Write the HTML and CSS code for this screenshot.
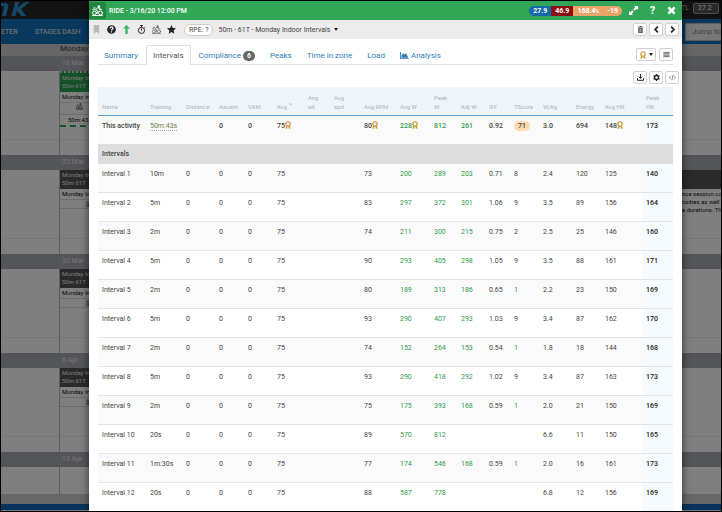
FILE: index.html
```html
<!DOCTYPE html>
<html lang="en">

<head>
	<meta charset="utf-8">
	<title>Ride intervals</title>
	<link rel="stylesheet" href="styles.css">
</head>

<body>
	<svg class="sprite" aria-hidden="true">
		<symbol id="cyclist" viewBox="0 0 20 20">
			<g fill="none" stroke="currentColor" stroke-width="1.7" stroke-linecap="round" stroke-linejoin="round">
				<circle cx="4.5" cy="14.5" r="3.5" />
				<circle cx="15.5" cy="14.5" r="3.5" />
				<path d="M15 6l-4-1.500-4.500 4 4.500 2.500-2 5M12 5l2 3.500h3.500M1 19.200h18M3 5.500h3M1.500 8.500h3" />
			</g>
			<circle cx="12.500" cy="2.500" r="2.200" fill="currentColor" />
		</symbol>
		<symbol id="medal" viewBox="0 0 12 16">
			<g fill="none" stroke="currentColor" stroke-width="2.4">
				<circle cx="6" cy="6" r="4.500" />
				<path d="M3.500 9.500v4.500H.5M8.500 9.500v4.500h3" />
			</g>
		</symbol>
	</svg>

	<div class="calendar">
		<header class="topbar">
			<svg class="logo" viewBox="0 0 30 16"><path d="M0 2h3c4 0 5 2 4 5L5 15H1l2-8c0-2 0-2-3-2zM14 1h4l-1.500 5.500L24 1h5l-9 7 5 7h-5l-4-5.500L14.500 15h-4z" fill="currentColor" /></svg>
			<label class="tl">TL <input type="text" value="27.2"></label>
		</header>
		<nav class="mainnav">
			<a href="#">ETER</a>
			<a href="#">STAGES DASH</a>
			<input class="jump" type="text" placeholder="Jump to" aria-label="Jump to">
		</nav>
		<div class="days"><span>Monday</span></div>

		<section class="week">
			<h2>16 Mar</h2>
			<div class="cells">
				<div class="cell"></div>
				<div class="cell">
					<div class="event done">
						<div class="event-head">Monday Indoor<br>50m 61T</div>
						<div class="event-name">Monday Indoor</div>
						<div class="event-icon"><svg><use href="#cyclist" /></svg></div>
						<div class="event-time">50m:43s</div>
					</div>
				</div>
				<div class="cell"></div>
			</div>
		</section>
		<section class="week">
			<h2>23 Mar</h2>
			<div class="cells">
				<div class="cell"></div>
				<div class="cell">
					<div class="event">
						<div class="event-head">Monday Indoor<br>50m 61T</div>
						<div class="event-name">Monday Indoor</div>
						<div class="event-icon"><svg><use href="#cyclist" /></svg></div>
					</div>
				</div>
				<div class="cell">
					<div class="event">
						<div class="event-head"></div>
						<p class="event-note">nce session co<br>nsities as well<br>e durations. Th</p>
					</div>
				</div>
			</div>
		</section>
		<section class="week">
			<h2>30 Mar</h2>
			<div class="cells">
				<div class="cell"></div>
				<div class="cell">
					<div class="event">
						<div class="event-head">Monday Indoor<br>50m 61T</div>
						<div class="event-name">Monday Indoor</div>
						<div class="event-icon"><svg><use href="#cyclist" /></svg></div>
					</div>
				</div>
				<div class="cell"></div>
			</div>
		</section>
		<section class="week">
			<h2>6 Apr</h2>
			<div class="cells">
				<div class="cell"></div>
				<div class="cell">
					<div class="event">
						<div class="event-head">Monday Indoor<br>50m 61T</div>
						<div class="event-name">Monday Indoor</div>
						<div class="event-icon"><svg><use href="#cyclist" /></svg></div>
					</div>
				</div>
				<div class="cell"></div>
			</div>
		</section>
		<section class="week last">
			<h2>13 Apr</h2>
			<div class="cells">
				<div class="cell"></div>
				<div class="cell"></div>
				<div class="cell"></div>
			</div>
		</section>
		<footer class="bottombar"></footer>
	</div>

	<div class="backdrop"></div>

	<main class="modal">
		<header class="modal-head">
			<span class="sport"><svg><use href="#cyclist" /></svg></span>
			<h1>RIDE - 3/16/20 12:00 PM</h1>
			<div class="scores">
				<span class="fitness">27.9</span>
				<span class="fatigue">46.9</span>
				<span class="form">168.4<small>%</small></span>
				<span class="form">-19</span>
			</div>
			<button class="head-btn" aria-label="Expand"><svg viewBox="0 0 10 10"><path d="M5.500 0H10v4.500L8.500 3 6.300 5.200 4.800 3.700 7 1.500zM4.500 10H0V5.500L1.500 7l2.200-2.200 1.500 1.500L3 8.500z" fill="currentColor" /></svg></button>
			<button class="head-btn help" aria-label="Help">?</button>
			<button class="head-btn" aria-label="Close"><svg viewBox="0 0 10 10"><path d="M1.500 1.500l7 7M8.500 1.500l-7 7" stroke="currentColor" stroke-width="2.800" /></svg></button>
		</header>

		<div class="toolbar">
			<button class="icon-btn light" aria-label="Bookmark"><svg viewBox="0 0 10 10"><path d="M2 0h6v10L5 7.500 2 10z" fill="currentColor" /></svg></button>
			<button class="icon-btn" aria-label="Info"><svg viewBox="0 0 10 10"><circle cx="5" cy="5" r="4.800" fill="currentColor" /><path d="M3.400 3.800C3.400 1.600 6.700 1.700 6.600 3.700 6.500 4.900 5 4.700 5 6.200M5 7v1.200" fill="none" stroke="#fff" stroke-width="1.300" /></svg></button>
			<button class="icon-btn green" aria-label="Upload"><svg viewBox="0 0 10 10"><path d="M5 0l3.800 4H6.300v6H3.700V4H1.200z" fill="currentColor" /></svg></button>
			<button class="icon-btn" aria-label="Timer"><svg viewBox="0 0 10 10"><g fill="none" stroke="currentColor" stroke-width="1.100"><circle cx="5" cy="6" r="3.400" /><path d="M3.500.6h3M5 .6v2M5 4v2.200M8 2.200l.8.8" /></g></svg></button>
			<button class="icon-btn gray" aria-label="Cycling"><svg><use href="#cyclist" /></svg></button>
			<button class="icon-btn" aria-label="Favourite"><svg viewBox="0 0 10 10"><path d="M5 0l1.500 3.300 3.500.4-2.600 2.400.7 3.600L5 7.900 1.900 9.700l.7-3.600L0 3.700l3.500-.4z" fill="currentColor" /></svg></button>
			<button class="rpe">RPE: ?</button>
			<button class="workout">50m - 61T - Monday Indoor Intervals <i class="caret"></i></button>
			<div class="group tight">
				<button class="box" aria-label="Delete"><svg viewBox="0 0 10 10"><path d="M1 1h2.500V0h3v1H9v1.300H1zM1.800 3h6.400v7H1.800z" fill="#555" /><path d="M3.500 4.500h3M3.500 6.200h3M3.500 8h3" stroke="#fff" stroke-width=".7" /></svg></button>
				<button class="box" aria-label="Previous"><svg viewBox="0 0 10 10"><path d="M7 1L3 5l4 4" fill="none" stroke="currentColor" stroke-width="2.400" /></svg></button>
				<button class="box" aria-label="Next"><svg viewBox="0 0 10 10"><path d="M3 1l4 4-4 4" fill="none" stroke="currentColor" stroke-width="2.400" /></svg></button>
			</div>
		</div>

		<nav class="tabs">
			<a href="#">Summary</a>
			<a href="#" class="active">Intervals</a>
			<a href="#">Compliance <span class="count">6</span></a>
			<a href="#">Peaks</a>
			<a href="#">Time in zone</a>
			<a href="#">Load</a>
			<a href="#"><svg class="chart" viewBox="0 0 10 8"><path d="M0 0h1v7h9v1H0zM1.500 6.500V4l2-3 1.800 2L7 1.500l2.300 5z" fill="currentColor" /></svg> Analysis</a>
			<div class="group">
				<button class="box wide" aria-label="Medals"><svg class="medal"><use href="#medal" /></svg><i class="caret"></i></button>
				<button class="box" aria-label="List"><svg viewBox="0 0 10 10"><path d="M.5 2h9M.5 4h9M.5 6h9M.5 8h9" stroke="#555" stroke-width="1.200" /></svg></button>
			</div>
		</nav>

		<div class="actions">
			<button class="box" aria-label="Download"><svg viewBox="0 0 10 10"><path d="M5 0v6M2.500 3.800L5 6.300l2.500-2.500M.7 6v3h8.600V6" fill="none" stroke="currentColor" stroke-width="1.400" /></svg></button>
			<button class="box" aria-label="Settings"><svg viewBox="0 0 10 10"><circle cx="5" cy="5" r="2.800" fill="none" stroke="currentColor" stroke-width="2" /><path d="M5 0v2M5 8v2M.7 2.500l1.700 1M7.600 6.500l1.700 1M.7 7.500l1.700-1M7.600 3.500l1.700-1" stroke="currentColor" stroke-width="1.800" /></svg></button>
			<button class="box" aria-label="Embed"><svg viewBox="0 0 10 10"><path d="M2.800 2.500L.5 5l2.300 2.500M7.200 2.500L9.500 5 7.200 7.500M5.800 1.500l-1.600 7" fill="none" stroke="#555" stroke-width="1" /></svg></button>
		</div>

		<table class="intervals">
			<colgroup>
				<col class="w48"><col class="w36"><col class="w33"><col class="w29"><col class="w29"><col class="w31">
				<col class="w26"><col class="w30"><col class="w36"><col class="w34"><col class="w27"><col class="w28">
				<col class="w25"><col class="w29"><col class="w33"><col class="w29"><col class="w41"><col class="w31">
			</colgroup>
			<thead>
				<tr>
					<th><span>Name</span></th>
					<th><span>Training</span></th>
					<th><span>Distance</span></th>
					<th><span>Ascent</span></th>
					<th><span>VAM</span></th>
					<th><span>Avg <sup>°F</sup></span></th>
					<th><span>Avg<br>alt</span></th>
					<th><span>Avg<br>spd</span></th>
					<th><span>Avg RPM</span></th>
					<th><span>Avg W</span></th>
					<th><span>Peak<br>W</span></th>
					<th><span>Adj W</span></th>
					<th><span>IFF</span></th>
					<th><span>TScore</span></th>
					<th><span>W/kg</span></th>
					<th><span>Energy</span></th>
					<th><span>Avg HR</span></th>
					<th><span>Peak<br>HR</span></th>
				</tr>
			</thead>
			<tbody id="rows">
				<tr class="total">
					<td>This activity</td>
					<td><span class="dotted">50m:43s</span></td>
					<td></td>
					<td>0</td>
					<td>0</td>
					<td>75<svg class="medal bronze"><use href="#medal" /></svg></td>
					<td></td>
					<td></td>
					<td>80<svg class="medal"><use href="#medal" /></svg></td>
					<td class="good">228<svg class="medal"><use href="#medal" /></svg></td>
					<td class="good">812</td>
					<td class="good">261</td>
					<td>0.92</td>
					<td><span class="score">71</span></td>
					<td>3.0</td>
					<td>694</td>
					<td>148<svg class="medal"><use href="#medal" /></svg></td>
					<td>173</td>
				</tr>
				<tr class="section">
					<th colspan="18">Intervals</th>
				</tr>
			</tbody>
		</table>
	</main>

	<script>
		// training, rpm, avg W, peak W, adj W, IFF, TScore, W/kg, energy, avg HR, peak HR
		const intervals = [
			["10m", 73, 200, 289, 203, "0.71", 8, "2.4", 120, 125, 140],
			["5m", 83, 297, 372, 301, "1.06", 9, "3.5", 89, 156, 164],
			["2m", 74, 211, 300, 215, "0.75", 2, "2.5", 25, 146, 160],
			["5m", 90, 293, 405, 298, "1.05", 9, "3.5", 88, 161, 171],
			["2m", 80, 189, 313, 186, "0.65", 1, "2.2", 23, 150, 169],
			["5m", 93, 290, 407, 293, "1.03", 9, "3.4", 87, 162, 170],
			["2m", 74, 152, 264, 153, "0.54", 1, "1.8", 18, 144, 168],
			["5m", 93, 290, 418, 292, "1.02", 9, "3.4", 87, 163, 173],
			["2m", 75, 175, 393, 168, "0.59", 1, "2.0", 21, 150, 169],
			["20s", 89, 570, 812, "", "", "", "6.6", 11, 150, 165],
			["1m:30s", 77, 174, 546, 168, "0.59", 1, "2.0", 16, 161, 173],
			["20s", 88, 587, 778, "", "", "", "6.8", 12, 156, 169]
		]
		const body = document.getElementById("rows")
		intervals.forEach((r, i) => {
			const cells = ["Interval " + (i + 1), r[0], 0, 0, 0, 75, "", "", ...r.slice(1)]
			const tr = body.insertRow()
			cells.forEach((value, col) => {
				const td = tr.insertCell()
				td.textContent = value
				if ((col >= 9 && col <= 11) || (col == 13 && value === 1)) td.className = "good"
			})
		})
	</script>
</body>

</html>
```
FILE: styles.css
```css
* {
	box-sizing: border-box;
}

body {
	position: relative;
	margin: 0;
	height: 100vh;
	overflow: hidden;
	border: 1px solid #000;
	background: #fff;
	color: #444;
	font-family: Roboto, "Liberation Sans", sans-serif;
	font-size: 7px;
	line-height: 10px;
}

button, input {
	font: inherit;
	color: inherit;
}

button {
	display: flex;
	align-items: center;
	justify-content: center;
	padding: 0;
	border: 0;
	background: none;
}

a {
	text-decoration: none;
}

.sprite {
	display: none;
}

/* calendar behind the dialog */
.calendar {
	height: 100%;
	overflow: hidden;
}

.topbar {
	display: flex;
	justify-content: space-between;
	height: 18px;
	padding-right: 2px;
	background: #262626;
}

.logo {
	width: 30px;
	height: 16px;
	color: #2f8fd0;
}

.tl {
	display: flex;
	align-items: center;
	gap: 4px;
	height: 14px;
	color: #ccc;
}

.tl input {
	width: 26px;
	height: 11px;
	padding: 0 4px;
	border: 1px solid #999;
	border-radius: 2px;
	background: #555;
	color: #fff;
}

.mainnav {
	display: flex;
	align-items: center;
	gap: 17px;
	height: 25px;
	background: #1070b8;
	font-weight: 500;
}

.mainnav a {
	color: #ddd;
}

.jump {
	width: 36px;
	height: 18px;
	margin-left: auto;
	padding: 0 0 0 6px;
	border: 1px solid #bbb;
	border-right: 0;
	background: #eee;
	font-size: 8px;
	font-weight: 400;
}

.jump::placeholder {
	color: #888;
}

.days {
	height: 12px;
	padding-left: 59px;
	background: #ccc;
	font-size: 8px;
}

.week h2 {
	margin: 0;
	height: 15px;
	padding-left: 61px;
	background: #a8abb0;
	color: #e8e8e8;
	font-size: 7px;
	font-weight: 400;
	line-height: 15px;
}

.cells {
	display: grid;
	grid-template-columns: 59px 1fr 39px;
	height: 84px;
	background: linear-gradient(#eee, #eee) 0 68px / 100% 1px no-repeat;
}

.last .cells {
	height: 27px;
	background: none;
}

.cell:first-child {
	border-right: 1px solid #bbb;
}

.cell {
	overflow: hidden;
}

.event {
	font-size: 6px;
	line-height: 8px;
	color: #111;
}

.event-head {
	height: 19px;
	padding: 1px 2px;
	background: #555;
	color: #eee;
}

.event-name {
	padding: 1px 2px;
	border-bottom: 1px solid #ddd;
}

.event-icon {
	height: 9px;
	padding-left: 26px;
	border-bottom: 1px solid #ddd;
	color: #555;
}

.event-icon svg {
	width: 7px;
	height: 7px;
}

.done {
	border-bottom: 2px dashed #2aa552;
}

.done .event-head {
	height: 21px;
	border-top: 2px dotted #ddd;
	background: #2aa552;
}

.done .event-icon {
	padding-left: 16px;
	height: 12px;
}

.event-time {
	padding: 1px 8px;
}

.event-note {
	margin: 0;
	padding-top: 1px;
	white-space: nowrap;
}

.bottombar {
	height: 16px;
	border-bottom: 6px solid #0d69b4;
	background: #d0d0d0;
}

.backdrop {
	position: absolute;
	inset: 0;
	background: rgba(0, 0, 0, .5);
}

/* dialog */
.modal {
	position: absolute;
	inset: 0 39px 0 88px;
	overflow: hidden;
	background: #fff;
	box-shadow: 0 0 8px rgba(0, 0, 0, .6);
}

.modal-head {
	display: flex;
	align-items: center;
	height: 19px;
	padding-right: 1px;
	background: #30a656;
	color: #fff;
}

.sport {
	display: flex;
	align-items: center;
	justify-content: center;
	width: 17px;
	height: 17px;
	margin-right: 3px;
	border-radius: 2px;
	background: #23853f;
}

.sport svg {
	width: 11px;
	height: 11px;
}

h1 {
	margin: 0;
	font-size: 7px;
	font-weight: 500;
}

.scores {
	display: flex;
	margin: 0 2px 0 auto;
	border-radius: 6px;
	overflow: hidden;
	font-weight: 700;
}

.scores span {
	padding: 0 4px;
}

.scores small {
	font-size: 5px;
}

.fitness {
	background: #156ba9;
}

.fatigue {
	background: #8c0d10;
}

.form {
	background: #e9a469;
}

.head-btn {
	width: 19px;
}

.head-btn svg {
	width: 9px;
	height: 9px;
}

.help {
	font-size: 11px;
	font-weight: 700;
}

.toolbar {
	display: flex;
	align-items: center;
	gap: 5px;
	height: 19px;
	padding: 0 3px 0 2px;
	background: #ececec;
}

.icon-btn {
	width: 10px;
	color: #222;
}

.icon-btn svg {
	width: 9px;
	height: 9px;
}

.icon-btn.light {
	color: #b5bab7;
}

.icon-btn.green {
	color: #3dae66;
}

.icon-btn.gray {
	color: #666;
}

.rpe {
	height: 12px;
	margin-left: 3px;
	padding: 0 4px;
	border: 1px solid #ccc;
	border-radius: 6px;
	background: #fff;
}

.workout {
	gap: 4px;
}

.caret {
	border: 2px solid transparent;
	border-top: 3px solid #222;
	border-bottom: 0;
}

.group {
	display: flex;
	gap: 3px;
	margin-left: auto;
}

.group.tight {
	gap: 2px;
}

.box {
	width: 14px;
	height: 13px;
	border: 1px solid #d0d0d0;
	border-radius: 2px;
	background: #fff;
	color: #222;
}

.box svg {
	width: 7px;
	height: 7px;
}

.box.wide {
	width: 20px;
	gap: 3px;
}

.tabs {
	display: flex;
	align-items: flex-start;
	gap: 1px;
	height: 20px;
	margin: 6px 9px 0;
	border-bottom: 1px solid #e2e2e2;
	font-size: 8px;
}

.tabs a {
	display: flex;
	align-items: center;
	gap: 2px;
	height: 20px;
	padding: 0 6px;
	border: 1px solid transparent;
	border-bottom: 0;
	color: #2d7fb8;
}

.tabs a:first-child {
	padding-left: 5px;
}

.tabs .active {
	border-color: #ddd;
	border-radius: 2px 2px 0 0;
	background: #fff;
	color: #555;
}

.tabs .group {
	padding-top: 3px;
}

.count {
	width: 12px;
	border-radius: 5px;
	background: #666;
	color: #fff;
	font-size: 7px;
	font-weight: 700;
	text-align: center;
}

.chart {
	width: 9px;
	height: 7px;
}

.actions {
	display: flex;
	justify-content: flex-end;
	gap: 2px;
	padding: 6px 3px 3px;
}

.box .medal,
.medal {
	width: 6px;
	height: 8px;
	color: #c99526;
}

.medal {
	vertical-align: -1px;
}

.medal.bronze {
	color: #e08a35;
}

.intervals {
	width: calc(100% - 18px);
	margin: 0 9px;
	table-layout: fixed;
	border-collapse: separate;
	border-spacing: 0;
}

.w25 { width: 25px; }
.w26 { width: 26px; }
.w27 { width: 27px; }
.w28 { width: 28px; }
.w29 { width: 29px; }
.w30 { width: 30px; }
.w31 { width: 31px; }
.w33 { width: 33px; }
.w34 { width: 34px; }
.w36 { width: 36px; }
.w41 { width: 41px; }
.w48 { width: 48px; }

thead th {
	height: 29px;
	padding: 0 0 4px 4px;
	border-bottom: 1px solid #5b9bcb;
	background: #edf5fb;
	color: #b0b4b8;
	font-size: 6px;
	font-weight: 400;
	line-height: 9px;
	text-align: left;
	vertical-align: bottom;
	white-space: nowrap;
}

thead sup {
	font-size: 4px;
	line-height: 4px;
}

td {
	height: 29px;
	padding: 5px 0 0 4px;
	border-bottom: 1px solid #e4e4e4;
	vertical-align: top;
	white-space: nowrap;
}

tbody tr:nth-child(odd) td {
	background: #fafafa;
}

tbody td:last-child,
tbody tr:nth-child(odd) td:last-child {
	background: #f6fbff;
	color: #222;
	font-weight: 500;
}

.total td {
	height: 28px;
	border-bottom: 0;
	font-weight: 500;
}

.section th {
	height: 20px;
	padding: 0 4px;
	background: #ddd;
	font-weight: 500;
	text-align: left;
}

.dotted {
	border-bottom: 1px dotted #aaa;
	color: #6b7d4f;
	font-weight: 400;
}

.score {
	display: inline-block;
	padding: 0 4px;
	border-radius: 5px;
	background: #fbdcae;
}

td.good {
	color: #2f9a4c;
}
```
